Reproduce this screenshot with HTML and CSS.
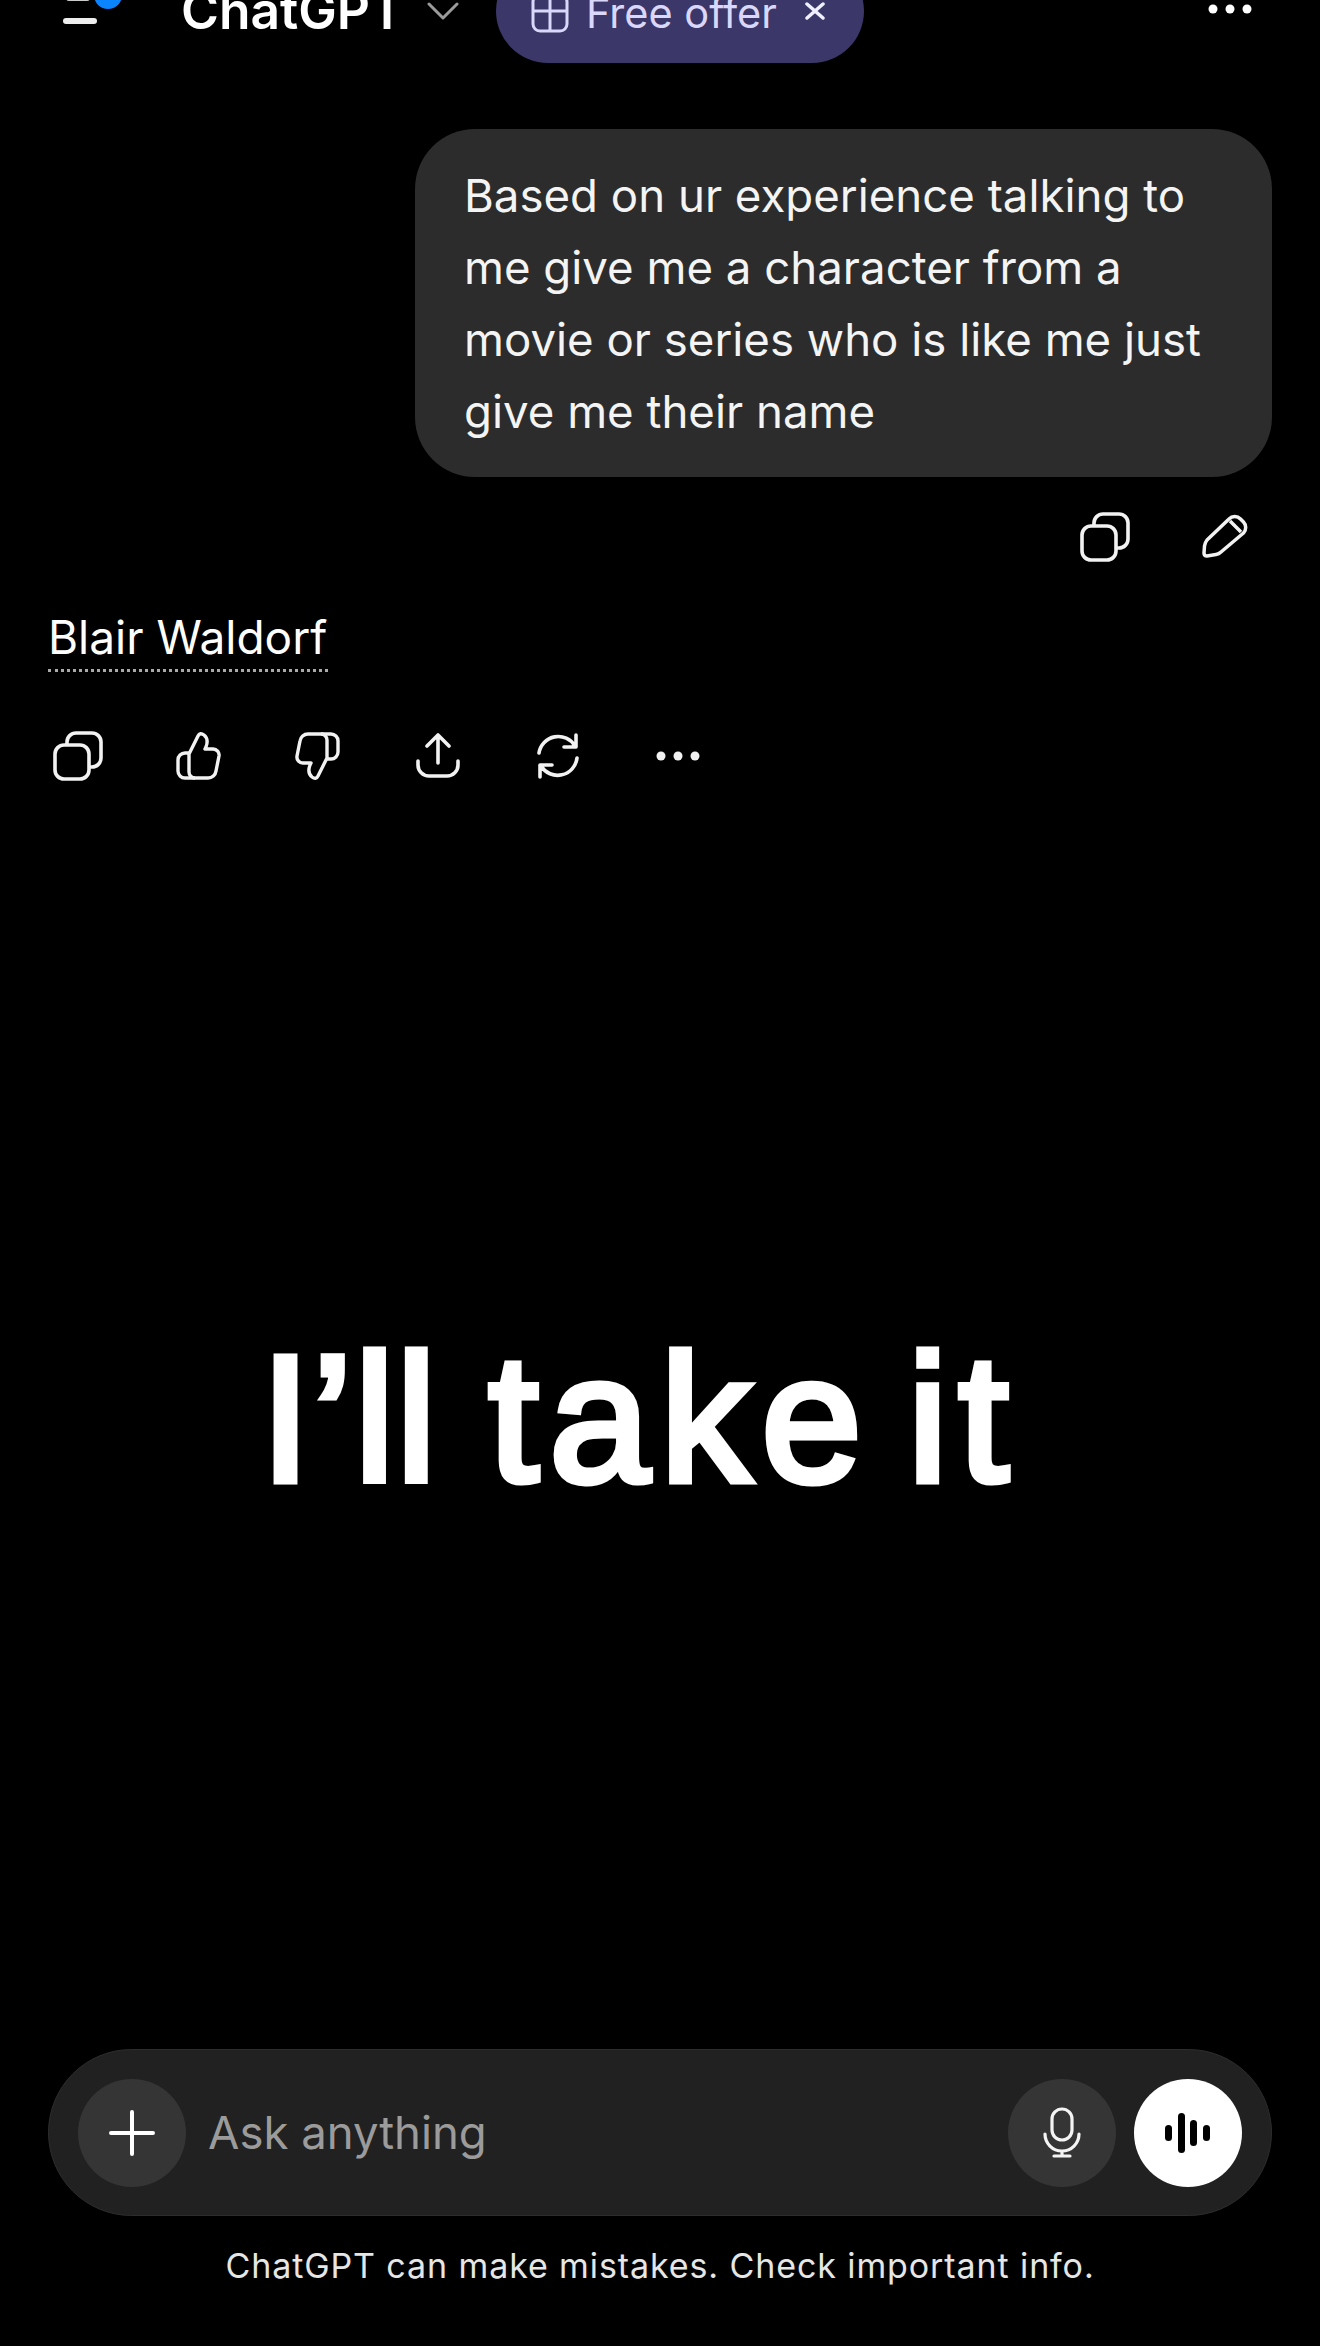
FILE: index.html
```html
<!DOCTYPE html>
<html lang="en">
<head>
<meta charset="UTF-8">
<meta name="viewport" content="width=device-width, initial-scale=1.0">
<title>ChatGPT</title>
<link rel="stylesheet" href="styles.css">
</head>
<body>
<header class="topbar">
    <svg class="menu-icon" width="64" height="60" viewBox="0 0 64 60">
        <rect x="6" y="14" width="24" height="6" rx="3" fill="#ccc"/>
        <rect x="3" y="37" width="34" height="6" rx="3" fill="#eee"/>
        <circle cx="48" cy="14" r="14" fill="#0a84ff"/>
    </svg>
    <span class="app-name">ChatGPT</span>
    <svg class="chevron" width="32" height="18" viewBox="0 0 32 18">
        <path d="M2 2 L16 16 L30 2" fill="none" stroke="#9b9b9b" stroke-width="3" stroke-linecap="round" stroke-linejoin="round"/>
    </svg>
    <div class="offer">
        <svg class="gift" width="38" height="40" viewBox="0 0 38 40">
            <path d="M9 2 H29 A7 7 0 0 1 36 9 V31 A7 7 0 0 1 29 38 H9 A7 7 0 0 1 2 31 V9 A7 7 0 0 1 9 2 Z M2 18 H36 M19 2 V38" fill="none" stroke="#d9d7fa" stroke-width="3"/>
        </svg>
        <span>Free offer</span>
        <svg class="offer-close" width="22" height="18" viewBox="0 0 22 18">
            <path d="M3 2 L19 16 M19 2 L3 16" fill="none" stroke="#f0effd" stroke-width="3.5" stroke-linecap="round"/>
        </svg>
    </div>
    <svg class="more" width="44" height="10" viewBox="0 0 44 10">
        <circle cx="5" cy="5" r="4.5" fill="#fff"/><circle cx="22" cy="5" r="4.5" fill="#fff"/><circle cx="39" cy="5" r="4.5" fill="#fff"/>
    </svg>
</header>

<main class="chat">
    <div class="bubble">Based on ur experience talking to me give me a character from a movie or series who is like me just give me their name</div>

    <div class="user-actions">
        <svg width="50" height="50" viewBox="0 0 50 50"><use href="#copy"/></svg>
        <svg width="46" height="46" viewBox="0 0 46 46">
            <path d="M5 26 L27 5 A8 8 0 0 1 38.5 5 L41.5 8 A8 8 0 0 1 41.5 19 L19 38 Q17 40 14 40.5 L5 42 Q2 42 2 39 L2.5 32 Q3 28.5 5 26 Z M28 7 L39 18" fill="none" stroke="#f2f2f2" stroke-width="3.5" stroke-linejoin="round"/>
        </svg>
    </div>

    <p class="reply"><span class="reply-text">Blair Waldorf</span></p>

    <div class="reply-actions">
        <svg width="50" height="50" viewBox="0 0 50 50"><use href="#copy"/></svg>
        <svg width="46" height="50" viewBox="0 0 46 50"><use href="#thumb"/></svg>
        <svg width="46" height="50" viewBox="0 0 46 50"><use href="#thumb" transform="rotate(180 23 25)"/></svg>
        <svg width="46" height="48" viewBox="0 0 46 48">
            <path d="M23 3 V31 M12 14 L23 3 L34 14 M3 29 V33 A11 11 0 0 0 14 44 H32 A11 11 0 0 0 43 33 V29" fill="none" stroke="#f2f2f2" stroke-width="3.6" stroke-linecap="round" stroke-linejoin="round"/>
        </svg>
        <svg width="46" height="48" viewBox="0 0 46 48">
            <path d="M4 21 A19.5 19.5 0 0 1 40 14 M42 26 A19.5 19.5 0 0 1 6 34 M41 3 V15 H29 M5 45 V33 H17" fill="none" stroke="#f2f2f2" stroke-width="3.6" stroke-linecap="round" stroke-linejoin="round"/>
        </svg>
        <svg width="46" height="10" viewBox="0 0 46 10">
            <circle cx="6" cy="5" r="4.5" fill="#f2f2f2"/><circle cx="23" cy="5" r="4.5" fill="#f2f2f2"/><circle cx="40" cy="5" r="4.5" fill="#f2f2f2"/>
        </svg>
    </div>

    <div class="caption"><span class="word-tight">I’ll</span> <span class="word-wide">take</span> <span class="word-wide word-last">it</span></div>
</main>

<div class="composer">
    <button class="round-btn">
        <svg width="46" height="46" viewBox="0 0 46 46">
            <path d="M23 2 V44 M2 23 H44" stroke="#fff" stroke-width="4" stroke-linecap="round"/>
        </svg>
    </button>
    <span class="placeholder">Ask anything</span>
    <button class="round-btn mic">
        <svg width="40" height="52" viewBox="0 0 40 52">
            <rect x="10" y="2" width="20" height="31" rx="10" fill="none" stroke="#f4f4f4" stroke-width="3.2"/>
            <path d="M3 27 A17 17 0 0 0 37 27 M20 44 V49 M12 49 H28" fill="none" stroke="#f4f4f4" stroke-width="3.2" stroke-linecap="round"/>
        </svg>
    </button>
    <button class="round-btn voice">
        <svg width="46" height="42" viewBox="0 0 46 42">
            <rect x="0" y="13" width="7" height="16" rx="3.5"/>
            <rect x="13" y="1" width="7" height="40" rx="3.5"/>
            <rect x="25" y="8" width="7" height="26" rx="3.5"/>
            <rect x="38" y="13" width="7" height="16" rx="3.5"/>
        </svg>
    </button>
</div>
<p class="disclaimer">ChatGPT can make mistakes. Check important info.</p>

<svg class="defs" width="0" height="0">
    <defs>
        <g id="copy" fill="none" stroke="#f2f2f2" stroke-width="3.6">
            <rect x="2" y="14" width="34" height="34" rx="9"/>
            <path d="M14 14 V11 A9 9 0 0 1 23 2 H39 A9 9 0 0 1 48 11 V27 A9 9 0 0 1 39 36 H36"/>
        </g>
        <g id="thumb" fill="none" stroke="#f2f2f2" stroke-width="3.4" stroke-linejoin="round">
            <path d="M14 22 H10 A7 7 0 0 0 3 29 V40 A7 7 0 0 0 10 47 H20"/>
            <path d="M14 23 L23 5 Q25 1 29 4 Q34 8 31 16 L30 18 H38 A6 6 0 0 1 44 25 L41 40 A8 8 0 0 1 33 47 H20 A6 6 0 0 1 14 41 Z"/>
        </g>
    </defs>
</svg>
</body>
</html>
```

FILE: styles.css
```css
* {
    box-sizing: border-box;
}
html, body {
    margin: 0;
    padding: 0;
}
body {
    width: 1320px;
    height: 2346px;
    overflow: hidden;
    background-color: #000;
    color: #fff;
    font-family: Inter, "Liberation Sans", sans-serif;
    display: flex;
    flex-direction: column;
}
.defs {
    display: none;
}

/* top bar, cut off by the top of the screenshot */
.topbar {
    display: flex;
    align-items: center;
    flex-shrink: 0;
    height: 104px;
    margin-top: -41px;
    padding: 0 68px 0 60px;
}
.app-name {
    margin-left: 57px;
    font-size: 51.5px;
    font-weight: 600;
    line-height: 1;
}
.chevron {
    margin-left: 23px;
    margin-top: 0;
}
.offer {
    display: flex;
    align-items: center;
    width: 368px;
    height: 104px;
    margin-left: 37px;
    padding-left: 35px;
    background-color: #3b3768;
    border-radius: 52px;
    color: #d9d7fa;
    font-size: 41.5px;
}
.gift {
    margin-top: 4px;
}
.offer span {
    margin: 3px 0 0 17px;
    white-space: nowrap;
}
.offer-close {
    margin-left: 27px;
}
.more {
    margin-left: auto;
    margin-top: -4px;
}

/* conversation */
.chat {
    flex: 1;
    display: flex;
    flex-direction: column;
    padding: 66px 48px 0;
}
.bubble {
    align-self: flex-end;
    width: 857px;
    padding: 31px 40px 29px 49px;
    background-color: #2c2c2c;
    border-radius: 60px;
    font-size: 45.6px;
    line-height: 72px;
    color: #f4f4f4;
}
.user-actions {
    display: flex;
    justify-content: flex-end;
    align-items: center;
    gap: 72px;
    margin-top: 35px;
    padding-right: 24px;
}
.reply {
    margin: 47px 0 0;
    font-size: 46px;
    line-height: 56px;
}
.reply-text {
    display: inline-block;
    padding: 0 1px 4px 0;
    border-bottom: 3px dotted #aaa;
}
.reply-actions {
    display: grid;
    grid-template-columns: repeat(6, 120px);
    align-items: center;
    justify-items: center;
    margin: 59px 0 0 -30px;
}
.caption {
    margin-top: 533px;
    padding-right: 40px;
    text-align: center;
    font-family: "Liberation Sans", sans-serif;
    font-size: 180px;
    font-weight: 400;
    line-height: 210px;
    -webkit-text-stroke: 7px #fff;
    white-space: nowrap;
}
.word-tight {
    letter-spacing: 2px;
}
.word-wide {
    letter-spacing: 11px;
}
.word-last {
    margin-left: -15px;
}

/* input box */
.composer {
    display: flex;
    align-items: center;
    flex-shrink: 0;
    height: 167px;
    margin: 0 48px;
    padding: 0 29px;
    background-color: #212121;
    border: 1px solid #2d2d2d;
    border-radius: 84px;
}
.round-btn {
    display: flex;
    align-items: center;
    justify-content: center;
    flex-shrink: 0;
    width: 108px;
    height: 108px;
    padding: 0;
    border: none;
    border-radius: 50%;
    background-color: #353535;
}
.placeholder {
    flex: 1;
    margin-left: 22px;
    font-size: 45.5px;
    color: #9b9b9b;
}
.voice {
    margin-left: 18px;
    background-color: #fff;
}
.disclaimer {
    flex-shrink: 0;
    margin: 29px 0 59px;
    text-align: center;
    font-size: 34px;
    line-height: 42px;
    letter-spacing: 0.9px;
    color: #e6e6e6;
}
```
